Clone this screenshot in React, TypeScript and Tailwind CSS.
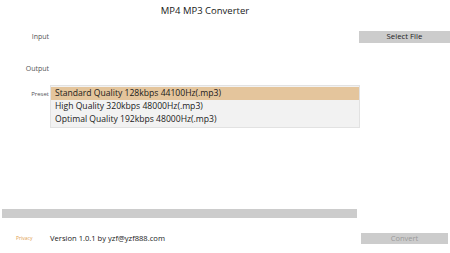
const presets = [
  "Standard Quality 128kbps 44100Hz(.mp3)",
  "High Quality 320kbps 48000Hz(.mp3)",
  "Optimal Quality 192kbps 48000Hz(.mp3)",
];

export default function App() {
  const selected = 0;

  return (
    <div
      className="flex h-[253px] w-[450px] flex-col bg-white text-[#1a1a1a]"
      style={{ fontFamily: '"Open Sans", "Noto Sans", sans-serif' }}
    >
      {/* Title */}
      <div className="flex h-[21px] w-[410px] items-center justify-center pt-[1px] text-[9.5px]">
        MP4 MP3 Converter
      </div>

      {/* Input */}
      <div className="mt-[10px] flex h-[12px] items-center">
        <div className="w-[50px] pr-[1px] text-right text-[7px] text-[#555]">Input</div>
        <div className="flex-1" />
        <button className="flex h-[12px] w-[91px] items-center justify-center bg-[#cccccc] text-[7.8px] text-[#222]">
          Select File
        </button>
      </div>

      {/* Output */}
      <div className="mt-[20px] flex h-[12px] items-center">
        <div className="w-[50px] pr-[1px] text-right text-[7px] text-[#555]">Output</div>
      </div>

      {/* Preset */}
      <div className="mt-[10px] flex">
        <div className="w-[50px] pt-[5px] pr-[1px] text-right text-[6px] text-[#555]">Preset</div>
        <div className="w-[310px] border border-[#e2e2e2] bg-[#f2f2f2] pt-[1px] pb-[1px]">
          {presets.map((p, i) => (
            <div
              key={p}
              className={`flex h-[13px] items-center pl-[4px] text-[8.6px] ${i === selected ? "bg-[#e4c59c]" : ""}`}
            >
              {p}
            </div>
          ))}
        </div>
      </div>

      {/* Progress */}
      <div className="mt-[81px] ml-[2px] h-[9px] w-[355px] bg-[#cccccc]" />

      {/* Footer */}
      <div className="mt-[15px] flex h-[11px] items-center">
        <div className="w-[50px] pl-[16px] text-[5px] text-[#e0a050]">Privacy</div>
        <div className="text-[7.6px]">Version 1.0.1 by yzf@yzf888.com</div>
        <div className="flex-1" />
        <button className="mr-[2px] flex h-[11px] w-[87px] items-center justify-center bg-[#cccccc] text-[7.5px] text-[#9a9a9a]">
          Convert
        </button>
      </div>
    </div>
  );
}
